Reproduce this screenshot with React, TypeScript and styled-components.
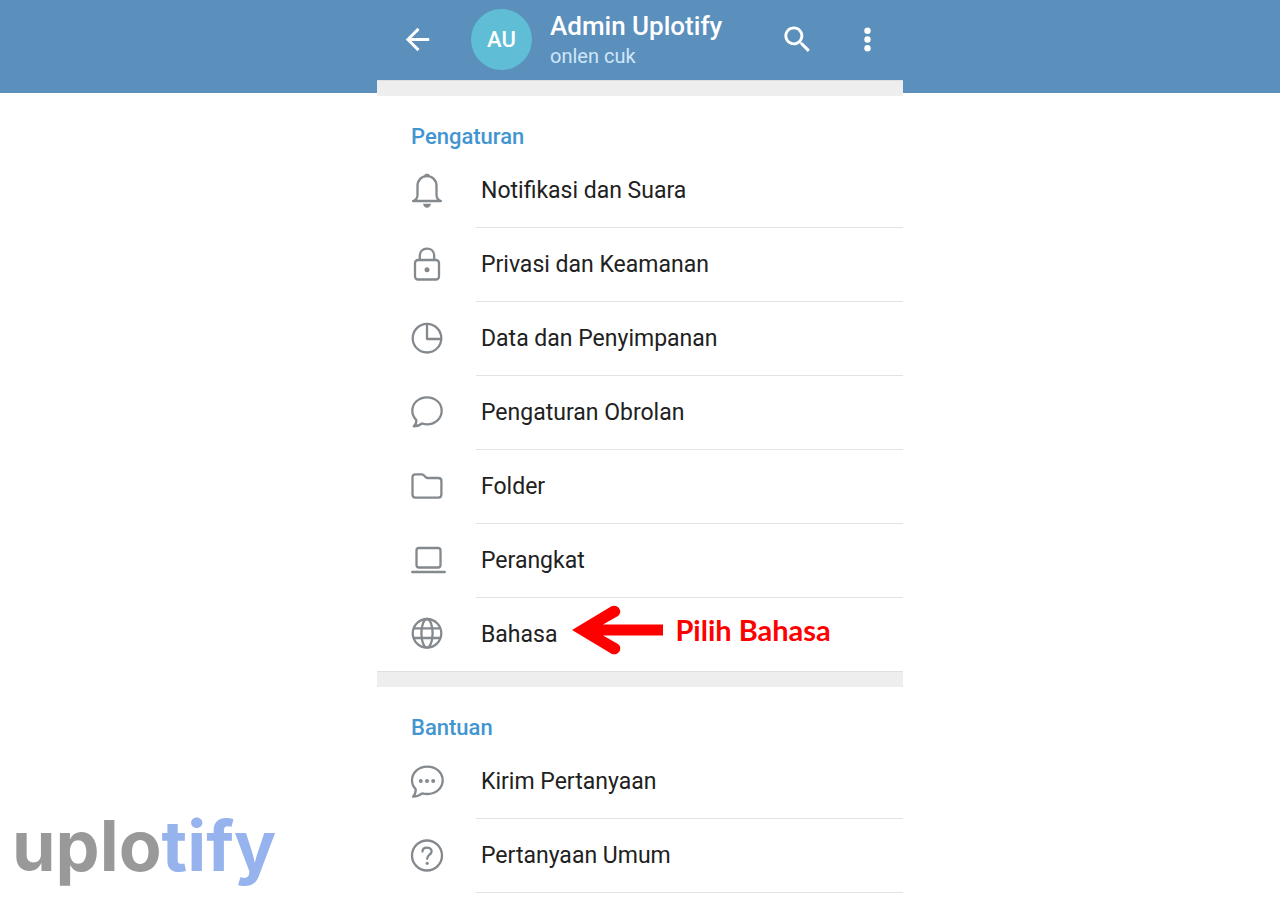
import React from "react";
import styled, { createGlobalStyle } from "styled-components";

const GlobalStyle = createGlobalStyle`
  *, *::before, *::after { box-sizing: border-box; }
  body {
    margin: 0;
    background: #ffffff;
    color: #212121;
    font-family: Roboto, "Liberation Sans", sans-serif;
  }
`;

const Header = styled.header`
  background: #5b8fbc;
  padding-bottom: 14px;
`;

const Bar = styled.div`
  display: flex;
  align-items: center;
  max-width: 526px;
  height: 79px;
  margin: 0 auto;
  padding: 0 18px 0 23px;
`;

const IconButton = styled.button`
  display: flex;
  flex: none;
  padding: 0;
  border: 0;
  background: none;
  color: #ffffff;
  cursor: pointer;

  svg {
    width: 35px;
    height: 35px;
    fill: currentColor;
  }
`;

const Avatar = styled.div`
  display: grid;
  place-items: center;
  flex: none;
  width: 61px;
  height: 61px;
  margin: 0 18px 0 36px;
  border-radius: 50%;
  background: #5fbdd6;
  color: #ffffff;
  font-size: 22px;
  font-weight: 500;
`;

const Profile = styled.div`
  flex: 1;
  min-width: 0;
`;

const Name = styled.h1`
  margin: 0;
  color: #ffffff;
  font-size: 26px;
  font-weight: 500;
  line-height: 32px;
`;

const Status = styled.p`
  margin: 0;
  color: #cfe6fa;
  font-size: 20px;
  line-height: 28px;
`;

const Actions = styled.div`
  display: flex;
  gap: 35px;
`;

const Content = styled.main`
  position: relative;
  max-width: 526px;
  margin: -13px auto 0;
`;

const Divider = styled.div`
  height: 16px;
  background: #eeeeee;
  border-top: 1px solid #dcdfe3;
`;

const SectionTitle = styled.h2`
  height: 58px;
  margin: 0;
  padding: 25px 34px 0;
  color: #4295d1;
  font-size: 22px;
  font-weight: 500;
  line-height: 32px;
`;

const List = styled.ul`
  margin: 0;
  padding: 0;
  list-style: none;
`;

const Row = styled.a<{ $last?: boolean }>`
  display: flex;
  align-items: center;
  height: ${(p) => (p.$last ? 73 : 74)}px;
  padding-left: 32px;
  color: inherit;
  text-decoration: none;
`;

const RowIcon = styled.svg`
  flex: none;
  width: 36px;
  height: 36px;
  overflow: visible;
  fill: none;
  stroke: #84898e;
  stroke-width: 2.3;
  stroke-linecap: round;
  stroke-linejoin: round;

  .solid {
    fill: #84898e;
    stroke: none;
  }
`;

const RowBody = styled.span<{ $last?: boolean }>`
  display: flex;
  flex: 1;
  align-items: center;
  align-self: stretch;
  gap: 15px;
  margin-left: 31px;
  padding-left: 5px;
  border-bottom: ${(p) => (p.$last ? "0" : "1px solid #e3e3e3")};
  font-size: 23px;
  line-height: 28px;
`;

const Callout = styled.span`
  display: flex;
  align-items: center;
  gap: 12px;
  padding-bottom: 10px;
  color: #ff0000;
  font-family: Lato, "Liberation Sans", sans-serif;
  font-size: 29px;
  font-weight: 700;
  white-space: nowrap;

  svg {
    width: 91px;
    height: 50px;
  }
`;

const Logo = styled.div`
  position: absolute;
  bottom: 12px;
  left: 12px;
  color: #999999;
  font-family: Inter, "Liberation Sans", sans-serif;
  font-size: 70px;
  font-weight: 700;
  line-height: 80px;

  span {
    color: #96b3ee;
  }
`;

const Page = styled.div`
  position: relative;
  min-height: 100vh;
`;

const BellIcon = () => (
  <>
    <path d="M4 28C7 27 8.500 25 8.500 22V13C8.500 7 12.500 3.200 18 3.200S27.500 7 27.500 13V22C27.500 25 29 27 32 28Z" />
    <path className="solid" d="M15.300 4V2.800C15.300 1.300 16.500 0.800 18 0.800S20.700 1.300 20.700 2.800V4ZM14 30.800H22C21.400 33.500 20 34.700 18 34.700S14.600 33.500 14 30.800Z" />
  </>
);

const LockIcon = () => (
  <>
    <rect x="6" y="13" width="24" height="19.500" rx="3" />
    <path d="M10.800 13V8.500C10.800 4.400 13.800 1.600 18 1.600S25.200 4.400 25.200 8.500V13" />
    <circle className="solid" cx="18" cy="22.700" r="2.500" />
  </>
);

const PieIcon = () => (
  <>
    <circle cx="18" cy="17.200" r="14.300" />
    <path d="M18 3V18H32" />
  </>
);

const ChatIcon = () => (
  <path d="M18 2.300C26.500 2.300 32.700 8.300 32.700 15.800S26.500 29.300 18 29.300C16.200 29.300 14.700 29 13.200 28.500C11 30.200 8 31.200 4.700 31.300C6.800 29.500 7.600 27.500 7.300 25C4.800 22.500 3.300 19.400 3.300 15.800C3.300 8.300 9.500 2.300 18 2.300Z" />
);

const FolderIcon = () => (
  <path d="M6.500 5.300H12.500C13.500 5.300 14.200 5.600 14.800 6.200L17 8.400C17.500 8.900 18 9 18.800 9H29.300C31.300 9 32.400 10.100 32.400 12V25.600C32.400 27.600 31.300 28.700 29.300 28.700H6.500C4.600 28.700 3.500 27.600 3.500 25.600V8.300C3.500 6.400 4.600 5.300 6.500 5.300Z" />
);

const LaptopIcon = () => (
  <>
    <rect x="7.500" y="5" width="24" height="19.500" rx="2.500" />
    <path d="M3.200 29H35.800" />
  </>
);

const GlobeIcon = () => (
  <>
    <circle cx="18" cy="16.300" r="14.300" />
    <ellipse cx="18" cy="16.300" rx="5.600" ry="14.300" />
    <path d="M5 11.300H31M5 21H31" />
  </>
);

const SupportIcon = () => (
  <>
    <path d="M18.300 2.700C27.200 2.700 33.700 8.700 33.700 16.300S27.200 30 18.300 30C16.500 30 14.800 29.800 13.200 29.400C10.800 31.300 7.500 32.600 4 32.700C6 30.500 6.900 28 6.700 25.300C4.400 22.900 3 19.800 3 16.300C3 8.700 9.400 2.700 18.300 2.700Z" />
    <circle className="solid" cx="11.800" cy="17" r="2" />
    <circle className="solid" cx="18" cy="17" r="2" />
    <circle className="solid" cx="24.200" cy="17" r="2" />
  </>
);

const HelpIcon = () => (
  <>
    <circle cx="18" cy="17.500" r="15" />
    <path d="M13.500 13.500C13.500 10.900 15.400 9.600 18 9.600S22.600 11.100 22.600 13.400C22.600 16.800 18.200 16.600 18.200 20.800" />
    <circle className="solid" cx="18.200" cy="25.300" r="1.600" />
  </>
);

type Item = { label: string; Icon: () => React.ReactElement; callout?: string };

const SECTIONS: { title: string; items: Item[] }[] = [
  {
    title: "Pengaturan",
    items: [
      { label: "Notifikasi dan Suara", Icon: BellIcon },
      { label: "Privasi dan Keamanan", Icon: LockIcon },
      { label: "Data dan Penyimpanan", Icon: PieIcon },
      { label: "Pengaturan Obrolan", Icon: ChatIcon },
      { label: "Folder", Icon: FolderIcon },
      { label: "Perangkat", Icon: LaptopIcon },
      { label: "Bahasa", Icon: GlobeIcon, callout: "Pilih Bahasa" },
    ],
  },
  {
    title: "Bantuan",
    items: [
      { label: "Kirim Pertanyaan", Icon: SupportIcon },
      { label: "Pertanyaan Umum", Icon: HelpIcon },
    ],
  },
];

export default function App() {
  return (
    <Page>
      <GlobalStyle />
      <Header>
        <Bar>
          <IconButton aria-label="Kembali">
            <svg viewBox="0 0 24 24">
              <path d="M20 11H7.830l5.590-5.590L12 4l-8 8 8 8 1.410-1.410L7.830 13H20v-2z" />
            </svg>
          </IconButton>
          <Avatar>AU</Avatar>
          <Profile>
            <Name>Admin Uplotify</Name>
            <Status>onlen cuk</Status>
          </Profile>
          <Actions>
            <IconButton aria-label="Cari">
              <svg viewBox="0 0 24 24">
                <path d="M15.500 14h-.79l-.28-.27C15.410 12.590 16 11.110 16 9.500 16 5.910 13.090 3 9.500 3S3 5.910 3 9.500 5.910 16 9.500 16c1.610 0 3.090-.59 4.230-1.570l.27.28v.79l5 4.990L20.490 19l-4.990-5zm-6 0C7.010 14 5 11.990 5 9.500S7.010 5 9.500 5 14 7.010 14 9.500 11.990 14 9.500 14z" />
              </svg>
            </IconButton>
            <IconButton aria-label="Menu lainnya">
              <svg viewBox="0 0 24 24">
                <circle cx="12" cy="6" r="2.200" />
                <circle cx="12" cy="12" r="2.200" />
                <circle cx="12" cy="18" r="2.200" />
              </svg>
            </IconButton>
          </Actions>
        </Bar>
      </Header>
      <Content>
        {SECTIONS.map(({ title, items }, s) => (
          <section key={title}>
            <Divider />
            <SectionTitle>{title}</SectionTitle>
            <List>
              {items.map(({ label, Icon, callout }, i) => {
                const last = s < SECTIONS.length - 1 && i === items.length - 1;
                return (
                  <li key={label}>
                    <Row href="#" $last={last}>
                      <RowIcon viewBox="0 0 36 36" aria-hidden="true">
                        <Icon />
                      </RowIcon>
                      <RowBody $last={last}>
                        {label}
                        {callout && (
                          <Callout>
                            <svg viewBox="0 0 91 50" aria-hidden="true">
                              <path
                                fill="#ff0000"
                                d="M0 25L39.500 1.200C46-1.500 51.500 6.500 46 11L31 19.500H91V30.500H31L46 39C51.500 43.500 46 51.500 39.500 48.800Z"
                              />
                            </svg>
                            {callout}
                          </Callout>
                        )}
                      </RowBody>
                    </Row>
                  </li>
                );
              })}
            </List>
          </section>
        ))}
      </Content>
      <Logo>
        uplo<span>tify</span>
      </Logo>
    </Page>
  );
}
